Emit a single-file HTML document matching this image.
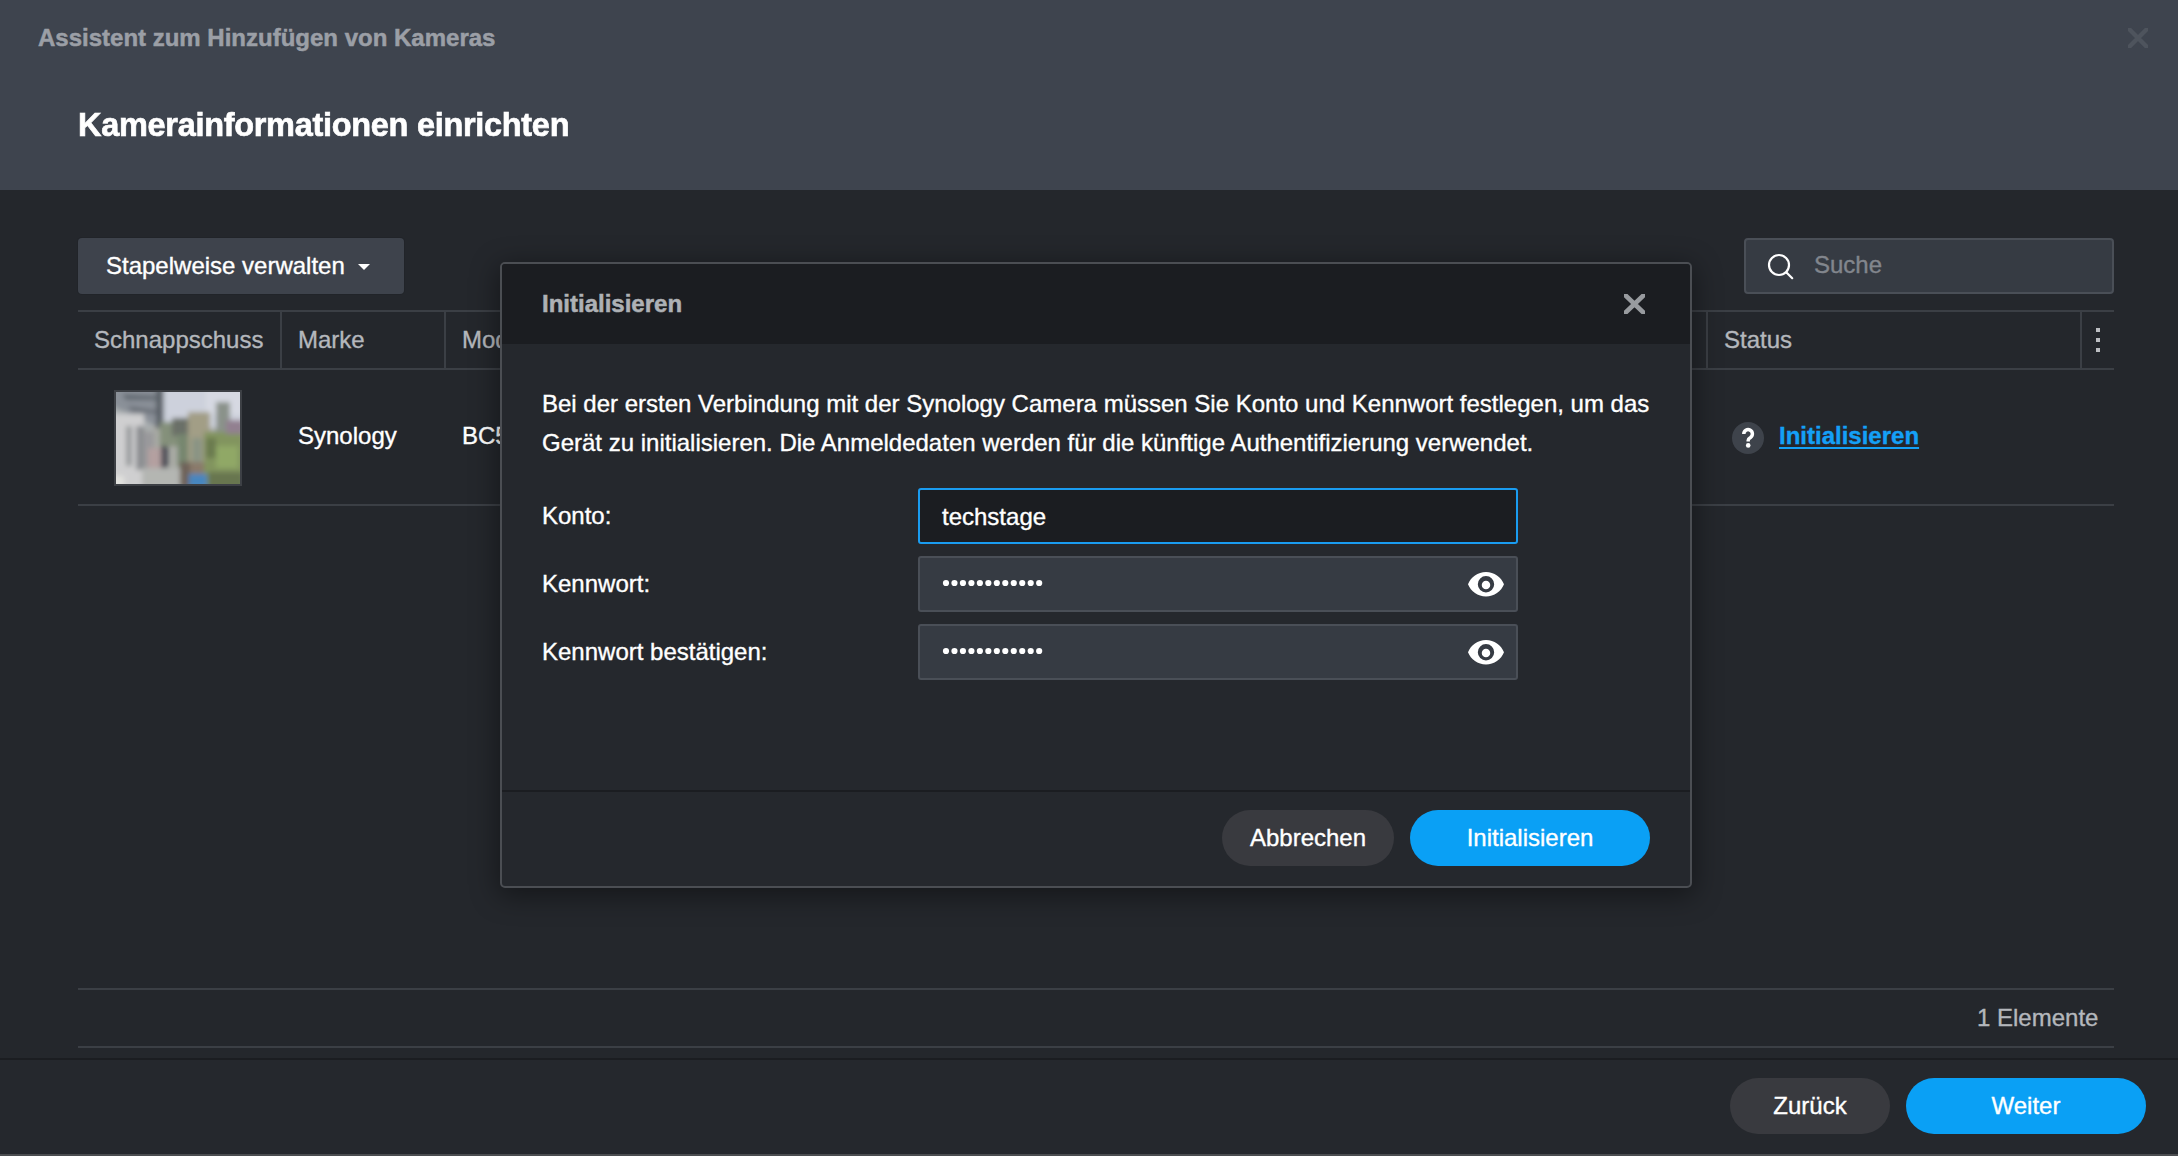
<!DOCTYPE html>
<html><head><meta charset="utf-8">
<style>
*{margin:0;padding:0;box-sizing:border-box}
html,body{width:2178px;height:1156px;overflow:hidden;background:#24272c;font-family:"Liberation Sans",sans-serif;}
.abs{position:absolute;white-space:nowrap}
.abs,.btn{-webkit-text-stroke:0.35px currentColor}
#hdr{position:absolute;left:0;top:0;width:2178px;height:190px;background:#3e444e}
#t1{left:38px;top:24px;font-size:24px;font-weight:bold;color:#9b9fa6;-webkit-text-stroke:0.5px #9b9fa6}
#t2{left:78px;top:105px;font-size:34px;letter-spacing:-0.3px;-webkit-text-stroke:0.7px #fff;transform:scaleX(0.955);transform-origin:0 0;font-weight:bold;color:#fff}
#closeTop{left:2128px;top:28px;width:20px;height:20px}
#stapel{left:78px;top:238px;width:326px;height:56px;background:#3e434c;border-radius:4px;box-shadow:0 0 0 1px #212429}
#stapel span{position:absolute;left:28px;top:14px;font-size:24px;color:#fff}
#stapel i{position:absolute;left:280px;top:26px;width:0;height:0;border-left:6px solid transparent;border-right:6px solid transparent;border-top:6px solid #fff}
#search{left:1744px;top:238px;width:370px;height:56px;background:#363b43;border:2px solid #4a4f57;border-radius:4px}
#search span{position:absolute;left:68px;top:11px;font-size:24px;color:#82868d}
.hline{position:absolute;height:2px;background:#3b3f45}
.vline{position:absolute;width:2px;background:#3b3f45}
.th{font-size:24px;color:#b4b7bc;top:326px}
.td{font-size:24px;color:#fff;top:422px}
#thumb{left:114px;top:390px;width:128px;height:96px;border:2px solid #3d4045;overflow:hidden;background:#b9bcc2}
#qicon{left:1732px;top:422px;width:32px;height:32px;border-radius:50%;background:#3e434b;color:#fff;font-weight:bold;font-size:26px;text-align:center;line-height:34px}
#link{left:1779px;top:422px;font-size:24px;font-weight:bold;color:#14a0f7;text-decoration:underline;text-decoration-thickness:2px;text-underline-offset:3px}
#elem{left:1977px;top:1004px;font-size:24px;color:#b4b7bc}
#foot{position:absolute;left:0;top:1058px;width:2178px;height:98px;background:#25282d;border-top:2px solid #1b1d21}
.btn{position:absolute;height:56px;border-radius:28px;font-size:24px;color:#fff;text-align:center;line-height:56px}
.grey{background:#393a3f}
.blue{background:#0aa0f5}
/* dialog */
#dlg{left:500px;top:262px;width:1192px;height:626px;background:#25282d;border:2px solid #4b4e53;border-radius:5px;box-shadow:0 6px 28px 2px rgba(0,0,0,0.42);overflow:hidden}
#dhead{position:absolute;left:0;top:0;width:100%;height:80px;background:#1b1d21}
#dtitle{left:40px;top:26px;font-size:24px;font-weight:bold;color:#aeb1b5;-webkit-text-stroke:0.5px #aeb1b5}
#dx{left:1122px;top:30px;width:21px;height:20px}
.para{left:40px;font-size:24px;color:#fff}
.lbl{left:40px;font-size:24px;color:#fff}
.inp{position:absolute;left:416px;width:600px;height:56px;background:#363b43;border:2px solid #4a4f57;border-radius:3px}
.inp.focus{background:#1b1d21;border-color:#1a9cf0}
.inp span{position:absolute;left:22px;top:13px;font-size:24px;color:#fff}
.dots{position:absolute;left:22px;top:22px}
.eye{position:absolute;left:546px;top:14px;width:40px;height:26px}
#dsep{position:absolute;left:0;top:526px;width:100%;height:2px;background:#1b1d21}
</style></head>
<body>
<div id="hdr"></div>
<div class="abs" id="t1">Assistent zum Hinzufügen von Kameras</div>
<div class="abs" id="t2">Kamerainformationen einrichten</div>
<svg class="abs" id="closeTop" viewBox="0 0 20 20"><path d="M0.8 0.8L19.2 19.2M19.2 0.8L0.8 19.2" stroke="#4e545d" stroke-width="4.4" stroke-linecap="round"/></svg>

<div class="abs" id="stapel"><span>Stapelweise verwalten</span><i></i></div>
<div class="abs" id="search">
<svg style="position:absolute;left:20px;top:12px" width="30" height="30" viewBox="0 0 30 30"><circle cx="13" cy="13" r="10" fill="none" stroke="#fff" stroke-width="2.2"/><path d="M20.5 20.5L26.2 26.2" stroke="#fff" stroke-width="2.2" stroke-linecap="round"/></svg>
<span>Suche</span></div>

<div class="hline" style="left:78px;top:310px;width:2036px"></div>
<div class="hline" style="left:78px;top:368px;width:2036px"></div>
<div class="vline" style="left:280px;top:312px;height:56px"></div>
<div class="vline" style="left:444px;top:312px;height:56px"></div>
<div class="vline" style="left:1706px;top:312px;height:56px"></div>
<div class="vline" style="left:2080px;top:312px;height:56px"></div>
<div class="abs th" style="left:94px">Schnappschuss</div>
<div class="abs th" style="left:298px">Marke</div>
<div class="abs th" style="left:462px">Modell</div>
<div class="abs th" style="left:1724px">Status</div>
<svg class="abs" style="left:2096px;top:328px" width="4" height="24"><rect x="0" y="0" width="4" height="4" fill="#bcbec2"/><rect x="0" y="10" width="4" height="4" fill="#bcbec2"/><rect x="0" y="20" width="4" height="4" fill="#bcbec2"/></svg>

<div class="abs" id="thumb"><svg width="124" height="92" viewBox="0 0 124 92" style="display:block">
<defs><filter id="bl" x="-20%" y="-20%" width="140%" height="140%"><feGaussianBlur stdDeviation="2.6"/></filter></defs>
<rect width="124" height="92" fill="#a8aaa4"/>
<g filter="url(#bl)">
<rect x="42" y="-8" width="92" height="44" fill="#cdd1dc"/>
<rect x="90" y="-8" width="40" height="30" fill="#d6d9e2"/>
<polygon points="-8,-8 48,-8 48,36 28,30 -8,14" fill="#8a9098"/>
<polygon points="6,2 44,4 44,8 10,8" fill="#606870"/>
<polygon points="12,14 40,18 40,22 16,20" fill="#6a7078"/>
<polygon points="-8,12 36,32 36,40 -8,22" fill="#a9aeb0"/>
<rect x="40" y="-8" width="7" height="44" fill="#5a6068"/>
<rect x="-8" y="22" width="36" height="80" fill="#cfcfd0"/>
<rect x="10" y="34" width="6" height="40" fill="#9a9c9e"/>
<rect x="20" y="34" width="8" height="44" fill="#8c8e92"/>
<rect x="28" y="40" width="10" height="36" fill="#9a9a9c"/>
<rect x="32" y="56" width="13" height="20" fill="#b4a0a0"/>
<rect x="45" y="52" width="7" height="28" fill="#4e4e56"/>
<rect x="44" y="30" width="20" height="24" fill="#84907a"/>
<rect x="56" y="26" width="16" height="18" fill="#6a7068"/>
<rect x="62" y="42" width="10" height="34" fill="#76866e"/>
<rect x="72" y="20" width="22" height="52" fill="#a29e86"/>
<rect x="76" y="46" width="10" height="24" fill="#8a9484"/>
<rect x="100" y="10" width="14" height="32" fill="#8a928a"/>
<rect x="88" y="40" width="40" height="58" fill="#82945e"/>
<rect x="100" y="54" width="22" height="22" fill="#90a866"/>
<rect x="90" y="46" width="10" height="20" fill="#6a7a50"/>
<rect x="110" y="28" width="18" height="14" fill="#928090"/>
<rect x="26" y="76" width="40" height="24" fill="#b4b6b2"/>
<rect x="64" y="70" width="10" height="26" fill="#6e6258"/>
<rect x="74" y="70" width="14" height="12" fill="#8a7a6a"/>
<rect x="73" y="82" width="18" height="14" fill="#4686bf"/>
<rect x="92" y="80" width="36" height="18" fill="#687650"/>
<rect x="-8" y="84" width="16" height="14" fill="#e2e2de"/>
</g></svg></div>
<div class="abs td" style="left:298px">Synology</div>
<div class="abs td" style="left:462px">BC500</div>
<div class="abs" id="qicon"><svg style="position:absolute;left:8px;top:4px" width="16" height="24" viewBox="0 0 16 24"><path d="M3.8 8A4.3 4.3 0 1 1 10.5 11.5C8.9 12.5 8.2 13 8.2 14.2L8.2 15.6" fill="none" stroke="#fff" stroke-width="3.5"/><circle cx="8.2" cy="19.4" r="2.3" fill="#fff"/></svg></div>
<div class="abs" id="link">Initialisieren</div>
<div class="hline" style="left:78px;top:504px;width:2036px"></div>

<div class="hline" style="left:78px;top:988px;width:2036px"></div>
<div class="hline" style="left:78px;top:1046px;width:2036px"></div>
<div class="abs" id="elem">1 Elemente</div>

<div id="foot"></div>
<div style="position:absolute;left:0;top:1154px;width:2178px;height:2px;background:#4b4d50"></div>
<div class="btn grey" style="left:1730px;top:1078px;width:160px">Zurück</div>
<div class="btn blue" style="left:1906px;top:1078px;width:240px">Weiter</div>

<div class="abs" id="dlg">
  <div id="dhead"></div>
  <div class="abs" id="dtitle">Initialisieren</div>
  <svg class="abs" id="dx" viewBox="0 0 21 20"><path d="M0.8 0.8L20.2 19.2M20.2 0.8L0.8 19.2" stroke="#989b9f" stroke-width="4.8" stroke-linecap="round"/></svg>
  <div class="abs para" style="top:126px">Bei der ersten Verbindung mit der Synology Camera müssen Sie Konto und Kennwort festlegen, um das</div>
  <div class="abs para" style="top:165px">Gerät zu initialisieren. Die Anmeldedaten werden für die künftige Authentifizierung verwendet.</div>
  <div class="abs lbl" style="top:238px">Konto:</div>
  <div class="abs lbl" style="top:306px">Kennwort:</div>
  <div class="abs lbl" style="top:374px">Kennwort bestätigen:</div>
  <div class="inp focus" style="top:224px"><span>techstage</span></div>
  <div class="inp" style="top:292px"><svg style="position:absolute;left:0;top:0" width="596" height="52"><circle cx="26.00" cy="25" r="3.1" fill="#fff"/><circle cx="34.47" cy="25" r="3.1" fill="#fff"/><circle cx="42.94" cy="25" r="3.1" fill="#fff"/><circle cx="51.41" cy="25" r="3.1" fill="#fff"/><circle cx="59.88" cy="25" r="3.1" fill="#fff"/><circle cx="68.35" cy="25" r="3.1" fill="#fff"/><circle cx="76.82" cy="25" r="3.1" fill="#fff"/><circle cx="85.29" cy="25" r="3.1" fill="#fff"/><circle cx="93.76" cy="25" r="3.1" fill="#fff"/><circle cx="102.23" cy="25" r="3.1" fill="#fff"/><circle cx="110.70" cy="25" r="3.1" fill="#fff"/><circle cx="119.17" cy="25" r="3.1" fill="#fff"/><path transform="translate(548,14) scale(1.636) translate(-1,-4.5)" fill="#fff" fill-rule="evenodd" d="M12 4.5C7 4.5 2.73 7.61 1 12c1.73 4.39 6 7.5 11 7.5s9.27-3.11 11-7.5c-1.73-4.39-6-7.5-11-7.5zM12 17a5 5 0 1 1 0-10a5 5 0 1 1 0 10zM12 15a2.6 2.6 0 1 0 0-5.2a2.6 2.6 0 1 0 0 5.2z"/></svg></div>
  <div class="inp" style="top:360px"><svg style="position:absolute;left:0;top:0" width="596" height="52"><circle cx="26.00" cy="25" r="3.1" fill="#fff"/><circle cx="34.47" cy="25" r="3.1" fill="#fff"/><circle cx="42.94" cy="25" r="3.1" fill="#fff"/><circle cx="51.41" cy="25" r="3.1" fill="#fff"/><circle cx="59.88" cy="25" r="3.1" fill="#fff"/><circle cx="68.35" cy="25" r="3.1" fill="#fff"/><circle cx="76.82" cy="25" r="3.1" fill="#fff"/><circle cx="85.29" cy="25" r="3.1" fill="#fff"/><circle cx="93.76" cy="25" r="3.1" fill="#fff"/><circle cx="102.23" cy="25" r="3.1" fill="#fff"/><circle cx="110.70" cy="25" r="3.1" fill="#fff"/><circle cx="119.17" cy="25" r="3.1" fill="#fff"/><path transform="translate(548,14) scale(1.636) translate(-1,-4.5)" fill="#fff" fill-rule="evenodd" d="M12 4.5C7 4.5 2.73 7.61 1 12c1.73 4.39 6 7.5 11 7.5s9.27-3.11 11-7.5c-1.73-4.39-6-7.5-11-7.5zM12 17a5 5 0 1 1 0-10a5 5 0 1 1 0 10zM12 15a2.6 2.6 0 1 0 0-5.2a2.6 2.6 0 1 0 0 5.2z"/></svg></div>
  <div id="dsep"></div>
  <div class="btn grey" style="left:720px;top:546px;width:172px">Abbrechen</div>
  <div class="btn blue" style="left:908px;top:546px;width:240px">Initialisieren</div>
</div>
</body></html>
